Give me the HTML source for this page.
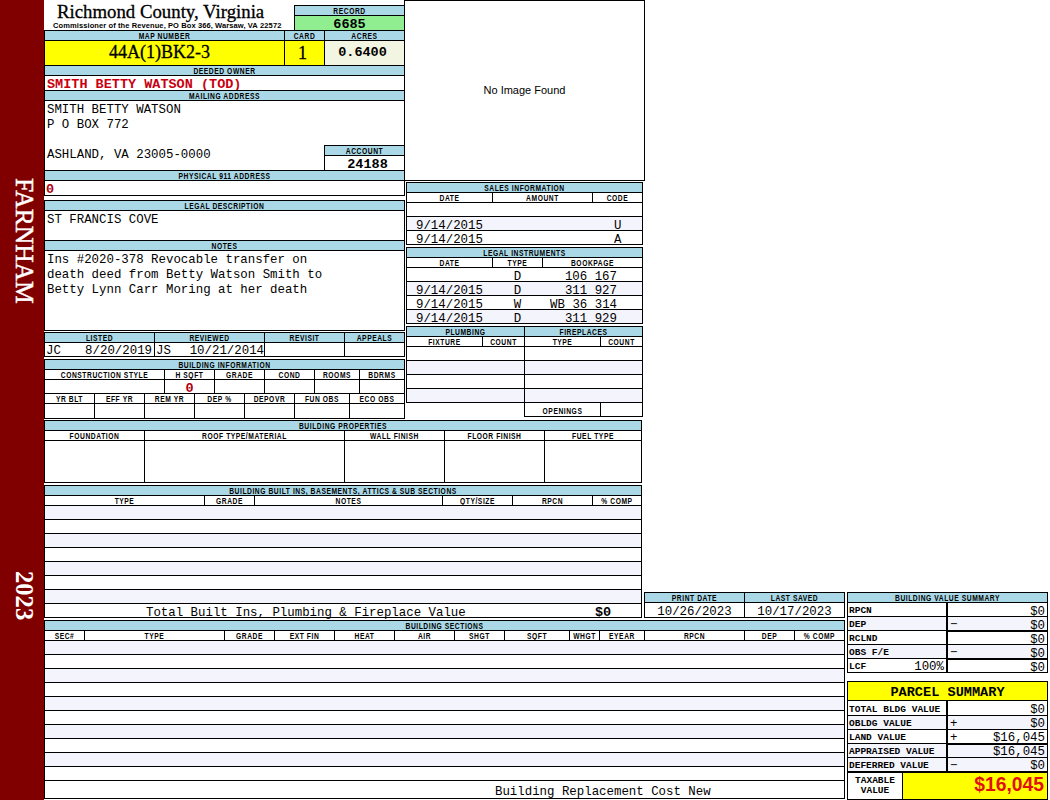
<!DOCTYPE html>
<html><head><meta charset="utf-8"><style>
html,body{margin:0;padding:0;background:#fff;width:1050px;height:800px;overflow:hidden}
body{position:relative}
div{position:absolute;box-sizing:border-box;white-space:nowrap}
.h{font-family:"Liberation Sans",sans-serif;font-weight:bold;font-size:8.4px;color:#000}
.m{font-family:"Liberation Mono",monospace;font-size:12.4px;color:#000}
.mb{font-family:"Liberation Mono",monospace;font-weight:bold;font-size:13.5px;color:#000}
.big{font-family:"Liberation Serif",serif;font-size:18px;color:#000;-webkit-text-stroke:0.3px #000}
.title{font-family:"Liberation Serif",serif;font-size:18.8px;color:#000;-webkit-text-stroke:0.3px #000}
.sub{font-family:"Liberation Sans",sans-serif;font-weight:bold;font-size:7.5px;letter-spacing:0.1px;color:#000}
.img{font-family:"Liberation Sans",sans-serif;font-size:11px;color:#000}
.lab{font-family:"Liberation Mono",monospace;font-weight:bold;font-size:9.5px;color:#000}
.ps{font-family:"Liberation Mono",monospace;font-weight:bold;font-size:13.6px;color:#000}
.tax{font-family:"Liberation Sans",sans-serif;font-weight:bold;font-size:19.3px;color:#e01010}
.red{color:#c80010}
.red2{color:#b00010}
.side{font-family:"Liberation Serif",serif;font-size:25.5px;color:#fff;-webkit-text-stroke:0.5px #fff;line-height:30px;transform-origin:0 0;transform:rotate(90deg) translate(0,-40px)}
.side2{font-family:"Liberation Serif",serif;font-weight:bold;font-size:24.6px;color:#fff;line-height:30px;transform-origin:0 0;transform:rotate(90deg) translate(0,-40px)}
</style></head><body>
<div style="left:0px;top:0px;width:44px;height:800px;background:#800000"></div>
<div class="side" style="left:-1px;top:178px;">FARNHAM</div>
<div class="side2" style="left:-1px;top:571px;">2023</div>
<div class="title" style="left:57px;top:2px;line-height:20px;text-align:left;">Richmond County, Virginia</div>
<div class="sub" style="left:53px;top:16px;line-height:20px;text-align:left;">Commissioner&nbsp;of&nbsp;the&nbsp;Revenue,&nbsp;PO&nbsp;Box&nbsp;366,&nbsp;Warsaw,&nbsp;VA&nbsp;22572</div>
<div style="left:294px;top:5px;width:111px;height:1px;background:#000"></div>
<div style="left:294px;top:30px;width:111px;height:1px;background:#000"></div>
<div style="left:294px;top:5px;width:1px;height:26px;background:#000"></div>
<div style="left:404px;top:5px;width:1px;height:26px;background:#000"></div>
<div style="left:294px;top:15px;width:111px;height:1px;background:#000"></div>
<div style="left:295px;top:6px;width:109px;height:9px;background:#aad8e6"></div>
<div class="h" style="left:295px;top:1px;width:109px;line-height:20px;text-align:center;transform:scaleX(0.8);letter-spacing:0.7px">RECORD</div>
<div style="left:295px;top:16px;width:109px;height:14px;background:#90ee90"></div>
<div class="mb" style="left:295px;top:15px;width:109px;line-height:20px;text-align:center;">6685</div>
<div style="left:44px;top:30px;width:361px;height:1px;background:#000"></div>
<div style="left:44px;top:40px;width:361px;height:1px;background:#000"></div>
<div style="left:44px;top:65px;width:361px;height:1px;background:#000"></div>
<div style="left:44px;top:30px;width:1px;height:166px;background:#000"></div>
<div style="left:404px;top:0px;width:1px;height:196px;background:#000"></div>
<div style="left:284px;top:30px;width:1px;height:36px;background:#000"></div>
<div style="left:324px;top:30px;width:1px;height:36px;background:#000"></div>
<div style="left:45px;top:31px;width:239px;height:9px;background:#aad8e6"></div>
<div class="h" style="left:45px;top:26px;width:239px;line-height:20px;text-align:center;transform:scaleX(0.8);letter-spacing:0.7px">MAP NUMBER</div>
<div style="left:285px;top:31px;width:39px;height:9px;background:#aad8e6"></div>
<div class="h" style="left:285px;top:26px;width:39px;line-height:20px;text-align:center;transform:scaleX(0.8);letter-spacing:0.7px">CARD</div>
<div style="left:325px;top:31px;width:79px;height:9px;background:#aad8e6"></div>
<div class="h" style="left:325px;top:26px;width:79px;line-height:20px;text-align:center;transform:scaleX(0.8);letter-spacing:0.7px">ACRES</div>
<div style="left:45px;top:41px;width:239px;height:24px;background:#ffff00"></div>
<div style="left:285px;top:41px;width:39px;height:24px;background:#ffff00"></div>
<div style="left:325px;top:41px;width:79px;height:24px;background:#f2f5e2"></div>
<div class="big" style="left:109px;top:42px;line-height:20px;text-align:left;">44A(1)BK2-3</div>
<div class="big" style="left:283px;top:43px;width:39px;line-height:20px;text-align:center;">1</div>
<div class="mb" style="left:323px;top:43px;width:79px;line-height:20px;text-align:center;">0.6400</div>
<div style="left:45px;top:66px;width:359px;height:9px;background:#aad8e6"></div>
<div class="h" style="left:45px;top:61px;width:359px;line-height:20px;text-align:center;transform:scaleX(0.8);letter-spacing:0.7px">DEEDED OWNER</div>
<div style="left:44px;top:75px;width:361px;height:1px;background:#000"></div>
<div class="mb red" style="left:47px;top:75px;line-height:20px;text-align:left;">SMITH&nbsp;BETTY&nbsp;WATSON&nbsp;(TOD)</div>
<div style="left:44px;top:90px;width:361px;height:1px;background:#000"></div>
<div style="left:45px;top:91px;width:359px;height:9px;background:#aad8e6"></div>
<div class="h" style="left:45px;top:86px;width:359px;line-height:20px;text-align:center;transform:scaleX(0.8);letter-spacing:0.7px">MAILING ADDRESS</div>
<div style="left:44px;top:100px;width:361px;height:1px;background:#000"></div>
<div class="m" style="left:47px;top:100px;line-height:20px;text-align:left;">SMITH&nbsp;BETTY&nbsp;WATSON</div>
<div class="m" style="left:47px;top:115px;line-height:20px;text-align:left;">P&nbsp;O&nbsp;BOX&nbsp;772</div>
<div class="m" style="left:47px;top:145px;line-height:20px;text-align:left;">ASHLAND,&nbsp;VA&nbsp;23005-0000</div>
<div style="left:324px;top:145px;width:81px;height:1px;background:#000"></div>
<div style="left:324px;top:170px;width:81px;height:1px;background:#000"></div>
<div style="left:324px;top:145px;width:1px;height:26px;background:#000"></div>
<div style="left:404px;top:145px;width:1px;height:26px;background:#000"></div>
<div style="left:324px;top:155px;width:81px;height:1px;background:#000"></div>
<div style="left:325px;top:146px;width:79px;height:9px;background:#aad8e6"></div>
<div class="h" style="left:325px;top:141px;width:79px;line-height:20px;text-align:center;transform:scaleX(0.8);letter-spacing:0.7px">ACCOUNT</div>
<div class="mb" style="left:328px;top:155px;width:79px;line-height:20px;text-align:center;">24188</div>
<div style="left:44px;top:170px;width:361px;height:1px;background:#000"></div>
<div style="left:45px;top:171px;width:359px;height:9px;background:#aad8e6"></div>
<div class="h" style="left:45px;top:166px;width:359px;line-height:20px;text-align:center;transform:scaleX(0.8);letter-spacing:0.7px">PHYSICAL 911 ADDRESS</div>
<div style="left:44px;top:180px;width:361px;height:1px;background:#000"></div>
<div class="mb red2" style="left:46px;top:180px;line-height:20px;text-align:left;">0</div>
<div style="left:44px;top:195px;width:361px;height:1px;background:#000"></div>
<div style="left:44px;top:200px;width:361px;height:1px;background:#000"></div>
<div style="left:44px;top:330px;width:361px;height:1px;background:#000"></div>
<div style="left:44px;top:200px;width:1px;height:131px;background:#000"></div>
<div style="left:404px;top:200px;width:1px;height:131px;background:#000"></div>
<div style="left:45px;top:201px;width:359px;height:9px;background:#aad8e6"></div>
<div class="h" style="left:45px;top:196px;width:359px;line-height:20px;text-align:center;transform:scaleX(0.8);letter-spacing:0.7px">LEGAL DESCRIPTION</div>
<div style="left:44px;top:210px;width:361px;height:1px;background:#000"></div>
<div class="m" style="left:47px;top:210px;line-height:20px;text-align:left;">ST&nbsp;FRANCIS&nbsp;COVE</div>
<div style="left:44px;top:240px;width:361px;height:1px;background:#000"></div>
<div style="left:45px;top:241px;width:359px;height:9px;background:#aad8e6"></div>
<div class="h" style="left:45px;top:236px;width:359px;line-height:20px;text-align:center;transform:scaleX(0.8);letter-spacing:0.7px">NOTES</div>
<div style="left:44px;top:250px;width:361px;height:1px;background:#000"></div>
<div class="m" style="left:47px;top:250px;line-height:20px;text-align:left;">Ins&nbsp;#2020-378&nbsp;Revocable&nbsp;transfer&nbsp;on</div>
<div class="m" style="left:47px;top:265px;line-height:20px;text-align:left;">death&nbsp;deed&nbsp;from&nbsp;Betty&nbsp;Watson&nbsp;Smith&nbsp;to</div>
<div class="m" style="left:47px;top:280px;line-height:20px;text-align:left;">Betty&nbsp;Lynn&nbsp;Carr&nbsp;Moring&nbsp;at&nbsp;her&nbsp;death</div>
<div style="left:44px;top:332px;width:361px;height:1px;background:#000"></div>
<div style="left:44px;top:356px;width:361px;height:1px;background:#000"></div>
<div style="left:44px;top:332px;width:1px;height:25px;background:#000"></div>
<div style="left:404px;top:332px;width:1px;height:25px;background:#000"></div>
<div style="left:44px;top:342px;width:361px;height:1px;background:#000"></div>
<div style="left:45px;top:333px;width:109px;height:9px;background:#aad8e6"></div>
<div class="h" style="left:45px;top:328px;width:109px;line-height:20px;text-align:center;transform:scaleX(0.8);letter-spacing:0.7px">LISTED</div>
<div style="left:44px;top:332px;width:1px;height:25px;background:#000"></div>
<div style="left:155px;top:333px;width:109px;height:9px;background:#aad8e6"></div>
<div class="h" style="left:155px;top:328px;width:109px;line-height:20px;text-align:center;transform:scaleX(0.8);letter-spacing:0.7px">REVIEWED</div>
<div style="left:154px;top:332px;width:1px;height:25px;background:#000"></div>
<div style="left:265px;top:333px;width:79px;height:9px;background:#aad8e6"></div>
<div class="h" style="left:265px;top:328px;width:79px;line-height:20px;text-align:center;transform:scaleX(0.8);letter-spacing:0.7px">REVISIT</div>
<div style="left:264px;top:332px;width:1px;height:25px;background:#000"></div>
<div style="left:345px;top:333px;width:59px;height:9px;background:#aad8e6"></div>
<div class="h" style="left:345px;top:328px;width:59px;line-height:20px;text-align:center;transform:scaleX(0.8);letter-spacing:0.7px">APPEALS</div>
<div style="left:344px;top:332px;width:1px;height:25px;background:#000"></div>
<div class="m" style="left:46px;top:341px;line-height:20px;text-align:left;">JC</div>
<div class="m" style="left:80px;top:341px;width:72px;line-height:20px;text-align:right;">8/20/2019</div>
<div class="m" style="left:156px;top:341px;line-height:20px;text-align:left;">JS</div>
<div class="m" style="left:180px;top:341px;width:84px;line-height:20px;text-align:right;">10/21/2014</div>
<div style="left:44px;top:359px;width:361px;height:1px;background:#000"></div>
<div style="left:44px;top:418px;width:361px;height:1px;background:#000"></div>
<div style="left:44px;top:359px;width:1px;height:60px;background:#000"></div>
<div style="left:404px;top:359px;width:1px;height:60px;background:#000"></div>
<div style="left:45px;top:360px;width:359px;height:9px;background:#aad8e6"></div>
<div class="h" style="left:45px;top:355px;width:359px;line-height:20px;text-align:center;transform:scaleX(0.8);letter-spacing:0.7px">BUILDING INFORMATION</div>
<div style="left:44px;top:369px;width:361px;height:1px;background:#000"></div>
<div class="h" style="left:45px;top:365px;width:119px;line-height:20px;text-align:center;transform:scaleX(0.8);letter-spacing:0.7px">CONSTRUCTION&nbsp;STYLE</div>
<div style="left:44px;top:369px;width:1px;height:25px;background:#000"></div>
<div class="h" style="left:165px;top:365px;width:49px;line-height:20px;text-align:center;transform:scaleX(0.8);letter-spacing:0.7px">H&nbsp;SQFT</div>
<div style="left:164px;top:369px;width:1px;height:25px;background:#000"></div>
<div class="h" style="left:215px;top:365px;width:49px;line-height:20px;text-align:center;transform:scaleX(0.8);letter-spacing:0.7px">GRADE</div>
<div style="left:214px;top:369px;width:1px;height:25px;background:#000"></div>
<div class="h" style="left:265px;top:365px;width:49px;line-height:20px;text-align:center;transform:scaleX(0.8);letter-spacing:0.7px">COND</div>
<div style="left:264px;top:369px;width:1px;height:25px;background:#000"></div>
<div class="h" style="left:315px;top:365px;width:44px;line-height:20px;text-align:center;transform:scaleX(0.8);letter-spacing:0.7px">ROOMS</div>
<div style="left:314px;top:369px;width:1px;height:25px;background:#000"></div>
<div class="h" style="left:360px;top:365px;width:44px;line-height:20px;text-align:center;transform:scaleX(0.8);letter-spacing:0.7px">BDRMS</div>
<div style="left:359px;top:369px;width:1px;height:25px;background:#000"></div>
<div style="left:44px;top:379px;width:361px;height:1px;background:#000"></div>
<div style="left:44px;top:393px;width:361px;height:1px;background:#000"></div>
<div class="mb red2" style="left:165px;top:379px;width:49px;line-height:20px;text-align:center;">0</div>
<div class="h" style="left:45px;top:389px;width:49px;line-height:20px;text-align:center;transform:scaleX(0.8);letter-spacing:0.7px">YR&nbsp;BLT</div>
<div style="left:44px;top:393px;width:1px;height:26px;background:#000"></div>
<div class="h" style="left:95px;top:389px;width:49px;line-height:20px;text-align:center;transform:scaleX(0.8);letter-spacing:0.7px">EFF&nbsp;YR</div>
<div style="left:94px;top:393px;width:1px;height:26px;background:#000"></div>
<div class="h" style="left:145px;top:389px;width:49px;line-height:20px;text-align:center;transform:scaleX(0.8);letter-spacing:0.7px">REM&nbsp;YR</div>
<div style="left:144px;top:393px;width:1px;height:26px;background:#000"></div>
<div class="h" style="left:195px;top:389px;width:49px;line-height:20px;text-align:center;transform:scaleX(0.8);letter-spacing:0.7px">DEP&nbsp;%</div>
<div style="left:194px;top:393px;width:1px;height:26px;background:#000"></div>
<div class="h" style="left:245px;top:389px;width:49px;line-height:20px;text-align:center;transform:scaleX(0.8);letter-spacing:0.7px">DEPOVR</div>
<div style="left:244px;top:393px;width:1px;height:26px;background:#000"></div>
<div class="h" style="left:295px;top:389px;width:54px;line-height:20px;text-align:center;transform:scaleX(0.8);letter-spacing:0.7px">FUN&nbsp;OBS</div>
<div style="left:294px;top:393px;width:1px;height:26px;background:#000"></div>
<div class="h" style="left:350px;top:389px;width:54px;line-height:20px;text-align:center;transform:scaleX(0.8);letter-spacing:0.7px">ECO&nbsp;OBS</div>
<div style="left:349px;top:393px;width:1px;height:26px;background:#000"></div>
<div style="left:44px;top:403px;width:361px;height:1px;background:#000"></div>
<div style="left:404px;top:0px;width:241px;height:1px;background:#000"></div>
<div style="left:404px;top:180px;width:241px;height:1px;background:#000"></div>
<div style="left:404px;top:0px;width:1px;height:181px;background:#000"></div>
<div style="left:644px;top:0px;width:1px;height:181px;background:#000"></div>
<div class="img" style="left:405px;top:80px;width:239px;line-height:20px;text-align:center;">No&nbsp;Image&nbsp;Found</div>
<div style="left:406px;top:182px;width:237px;height:1px;background:#000"></div>
<div style="left:406px;top:244px;width:237px;height:1px;background:#000"></div>
<div style="left:406px;top:182px;width:1px;height:63px;background:#000"></div>
<div style="left:642px;top:182px;width:1px;height:63px;background:#000"></div>
<div style="left:407px;top:183px;width:235px;height:9px;background:#aad8e6"></div>
<div class="h" style="left:407px;top:178px;width:235px;line-height:20px;text-align:center;transform:scaleX(0.8);letter-spacing:0.7px">SALES&nbsp;INFORMATION</div>
<div style="left:406px;top:192px;width:237px;height:1px;background:#000"></div>
<div class="h" style="left:407px;top:188px;width:85px;line-height:20px;text-align:center;transform:scaleX(0.8);letter-spacing:0.7px">DATE</div>
<div class="h" style="left:493px;top:188px;width:99px;line-height:20px;text-align:center;transform:scaleX(0.8);letter-spacing:0.7px">AMOUNT</div>
<div class="h" style="left:593px;top:188px;width:49px;line-height:20px;text-align:center;transform:scaleX(0.8);letter-spacing:0.7px">CODE</div>
<div style="left:492px;top:192px;width:1px;height:11px;background:#000"></div>
<div style="left:592px;top:192px;width:1px;height:11px;background:#000"></div>
<div style="left:406px;top:202px;width:237px;height:1px;background:#000"></div>
<div style="left:406px;top:216px;width:237px;height:1px;background:#000"></div>
<div style="left:406px;top:230px;width:237px;height:1px;background:#000"></div>
<div style="left:407px;top:217px;width:235px;height:13px;background:#f4f4fc"></div>
<div class="m" style="left:416px;top:216px;line-height:20px;text-align:left;">9/14/2015</div>
<div class="m" style="left:614px;top:216px;line-height:20px;text-align:left;">U</div>
<div class="m" style="left:416px;top:230px;line-height:20px;text-align:left;">9/14/2015</div>
<div class="m" style="left:614px;top:230px;line-height:20px;text-align:left;">A</div>
<div style="left:406px;top:247px;width:237px;height:1px;background:#000"></div>
<div style="left:406px;top:323px;width:237px;height:1px;background:#000"></div>
<div style="left:406px;top:247px;width:1px;height:77px;background:#000"></div>
<div style="left:642px;top:247px;width:1px;height:77px;background:#000"></div>
<div style="left:407px;top:248px;width:235px;height:9px;background:#aad8e6"></div>
<div class="h" style="left:407px;top:243px;width:235px;line-height:20px;text-align:center;transform:scaleX(0.8);letter-spacing:0.7px">LEGAL&nbsp;INSTRUMENTS</div>
<div style="left:406px;top:257px;width:237px;height:1px;background:#000"></div>
<div class="h" style="left:407px;top:253px;width:85px;line-height:20px;text-align:center;transform:scaleX(0.8);letter-spacing:0.7px">DATE</div>
<div class="h" style="left:493px;top:253px;width:49px;line-height:20px;text-align:center;transform:scaleX(0.8);letter-spacing:0.7px">TYPE</div>
<div class="h" style="left:543px;top:253px;width:99px;line-height:20px;text-align:center;transform:scaleX(0.8);letter-spacing:0.7px">BOOKPAGE</div>
<div style="left:492px;top:257px;width:1px;height:11px;background:#000"></div>
<div style="left:542px;top:257px;width:1px;height:11px;background:#000"></div>
<div style="left:406px;top:267px;width:237px;height:1px;background:#000"></div>
<div class="m" style="left:492px;top:267px;width:51px;line-height:20px;text-align:center;">D</div>
<div class="m" style="left:517px;top:267px;width:100px;line-height:20px;text-align:right;">106&nbsp;167</div>
<div style="left:406px;top:281px;width:237px;height:1px;background:#000"></div>
<div style="left:407px;top:282px;width:235px;height:13px;background:#f4f4fc"></div>
<div class="m" style="left:416px;top:281px;line-height:20px;text-align:left;">9/14/2015</div>
<div class="m" style="left:492px;top:281px;width:51px;line-height:20px;text-align:center;">D</div>
<div class="m" style="left:517px;top:281px;width:100px;line-height:20px;text-align:right;">311&nbsp;927</div>
<div style="left:406px;top:295px;width:237px;height:1px;background:#000"></div>
<div class="m" style="left:416px;top:295px;line-height:20px;text-align:left;">9/14/2015</div>
<div class="m" style="left:492px;top:295px;width:51px;line-height:20px;text-align:center;">W</div>
<div class="m" style="left:517px;top:295px;width:100px;line-height:20px;text-align:right;">WB&nbsp;36&nbsp;314</div>
<div style="left:406px;top:309px;width:237px;height:1px;background:#000"></div>
<div style="left:407px;top:310px;width:235px;height:13px;background:#f4f4fc"></div>
<div class="m" style="left:416px;top:309px;line-height:20px;text-align:left;">9/14/2015</div>
<div class="m" style="left:492px;top:309px;width:51px;line-height:20px;text-align:center;">D</div>
<div class="m" style="left:517px;top:309px;width:100px;line-height:20px;text-align:right;">311&nbsp;929</div>
<div style="left:406px;top:323px;width:237px;height:1px;background:#000"></div>
<div style="left:406px;top:326px;width:119px;height:1px;background:#000"></div>
<div style="left:406px;top:402px;width:119px;height:1px;background:#000"></div>
<div style="left:406px;top:326px;width:1px;height:77px;background:#000"></div>
<div style="left:524px;top:326px;width:1px;height:77px;background:#000"></div>
<div style="left:524px;top:326px;width:119px;height:1px;background:#000"></div>
<div style="left:524px;top:416px;width:119px;height:1px;background:#000"></div>
<div style="left:524px;top:326px;width:1px;height:91px;background:#000"></div>
<div style="left:642px;top:326px;width:1px;height:91px;background:#000"></div>
<div style="left:407px;top:327px;width:117px;height:9px;background:#aad8e6"></div>
<div class="h" style="left:407px;top:322px;width:117px;line-height:20px;text-align:center;transform:scaleX(0.8);letter-spacing:0.7px">PLUMBING</div>
<div style="left:525px;top:327px;width:117px;height:9px;background:#aad8e6"></div>
<div class="h" style="left:525px;top:322px;width:117px;line-height:20px;text-align:center;transform:scaleX(0.8);letter-spacing:0.7px">FIREPLACES</div>
<div style="left:406px;top:336px;width:237px;height:1px;background:#000"></div>
<div style="left:406px;top:346px;width:237px;height:1px;background:#000"></div>
<div class="h" style="left:407px;top:332px;width:75px;line-height:20px;text-align:center;transform:scaleX(0.8);letter-spacing:0.7px">FIXTURE</div>
<div class="h" style="left:483px;top:332px;width:41px;line-height:20px;text-align:center;transform:scaleX(0.8);letter-spacing:0.7px">COUNT</div>
<div class="h" style="left:525px;top:332px;width:75px;line-height:20px;text-align:center;transform:scaleX(0.8);letter-spacing:0.7px">TYPE</div>
<div class="h" style="left:601px;top:332px;width:41px;line-height:20px;text-align:center;transform:scaleX(0.8);letter-spacing:0.7px">COUNT</div>
<div style="left:482px;top:336px;width:1px;height:11px;background:#000"></div>
<div style="left:600px;top:336px;width:1px;height:11px;background:#000"></div>
<div style="left:600px;top:402px;width:1px;height:15px;background:#000"></div>
<div style="left:406px;top:360px;width:237px;height:1px;background:#000"></div>
<div style="left:407px;top:361px;width:235px;height:13px;background:#f4f4fc"></div>
<div style="left:406px;top:374px;width:237px;height:1px;background:#000"></div>
<div style="left:406px;top:388px;width:237px;height:1px;background:#000"></div>
<div style="left:407px;top:389px;width:235px;height:13px;background:#f4f4fc"></div>
<div style="left:406px;top:402px;width:237px;height:1px;background:#000"></div>
<div style="left:524px;top:326px;width:1px;height:91px;background:#000"></div>
<div class="h" style="left:525px;top:401px;width:75px;line-height:20px;text-align:center;transform:scaleX(0.8);letter-spacing:0.7px">OPENINGS</div>
<div style="left:44px;top:420px;width:598px;height:1px;background:#000"></div>
<div style="left:44px;top:482px;width:598px;height:1px;background:#000"></div>
<div style="left:44px;top:420px;width:1px;height:63px;background:#000"></div>
<div style="left:641px;top:420px;width:1px;height:63px;background:#000"></div>
<div style="left:45px;top:421px;width:596px;height:9px;background:#aad8e6"></div>
<div class="h" style="left:45px;top:416px;width:596px;line-height:20px;text-align:center;transform:scaleX(0.8);letter-spacing:0.7px">BUILDING&nbsp;PROPERTIES</div>
<div style="left:44px;top:430px;width:598px;height:1px;background:#000"></div>
<div style="left:44px;top:440px;width:598px;height:1px;background:#000"></div>
<div class="h" style="left:45px;top:426px;width:99px;line-height:20px;text-align:center;transform:scaleX(0.8);letter-spacing:0.7px">FOUNDATION</div>
<div style="left:44px;top:430px;width:1px;height:53px;background:#000"></div>
<div class="h" style="left:145px;top:426px;width:199px;line-height:20px;text-align:center;transform:scaleX(0.8);letter-spacing:0.7px">ROOF&nbsp;TYPE/MATERIAL</div>
<div style="left:144px;top:430px;width:1px;height:53px;background:#000"></div>
<div class="h" style="left:345px;top:426px;width:99px;line-height:20px;text-align:center;transform:scaleX(0.8);letter-spacing:0.7px">WALL&nbsp;FINISH</div>
<div style="left:344px;top:430px;width:1px;height:53px;background:#000"></div>
<div class="h" style="left:445px;top:426px;width:99px;line-height:20px;text-align:center;transform:scaleX(0.8);letter-spacing:0.7px">FLOOR&nbsp;FINISH</div>
<div style="left:444px;top:430px;width:1px;height:53px;background:#000"></div>
<div class="h" style="left:545px;top:426px;width:96px;line-height:20px;text-align:center;transform:scaleX(0.8);letter-spacing:0.7px">FUEL&nbsp;TYPE</div>
<div style="left:544px;top:430px;width:1px;height:53px;background:#000"></div>
<div style="left:44px;top:485px;width:598px;height:1px;background:#000"></div>
<div style="left:44px;top:617px;width:598px;height:1px;background:#000"></div>
<div style="left:44px;top:485px;width:1px;height:133px;background:#000"></div>
<div style="left:641px;top:485px;width:1px;height:133px;background:#000"></div>
<div style="left:45px;top:486px;width:596px;height:9px;background:#aad8e6"></div>
<div class="h" style="left:45px;top:481px;width:596px;line-height:20px;text-align:center;transform:scaleX(0.8);letter-spacing:0.7px">BUILDING&nbsp;BUILT&nbsp;INS,&nbsp;BASEMENTS,&nbsp;ATTICS&nbsp;&amp;&nbsp;SUB&nbsp;SECTIONS</div>
<div style="left:44px;top:495px;width:598px;height:1px;background:#000"></div>
<div style="left:44px;top:505px;width:598px;height:1px;background:#000"></div>
<div class="h" style="left:45px;top:491px;width:159px;line-height:20px;text-align:center;transform:scaleX(0.8);letter-spacing:0.7px">TYPE</div>
<div style="left:44px;top:495px;width:1px;height:11px;background:#000"></div>
<div class="h" style="left:205px;top:491px;width:49px;line-height:20px;text-align:center;transform:scaleX(0.8);letter-spacing:0.7px">GRADE</div>
<div style="left:204px;top:495px;width:1px;height:11px;background:#000"></div>
<div class="h" style="left:255px;top:491px;width:187px;line-height:20px;text-align:center;transform:scaleX(0.8);letter-spacing:0.7px">NOTES</div>
<div style="left:254px;top:495px;width:1px;height:11px;background:#000"></div>
<div class="h" style="left:443px;top:491px;width:69px;line-height:20px;text-align:center;transform:scaleX(0.8);letter-spacing:0.7px">QTY/SIZE</div>
<div style="left:442px;top:495px;width:1px;height:11px;background:#000"></div>
<div class="h" style="left:513px;top:491px;width:79px;line-height:20px;text-align:center;transform:scaleX(0.8);letter-spacing:0.7px">RPCN</div>
<div style="left:512px;top:495px;width:1px;height:11px;background:#000"></div>
<div class="h" style="left:593px;top:491px;width:48px;line-height:20px;text-align:center;transform:scaleX(0.8);letter-spacing:0.7px">%&nbsp;COMP</div>
<div style="left:592px;top:495px;width:1px;height:11px;background:#000"></div>
<div style="left:45px;top:506px;width:596px;height:13px;background:#f4f4fc"></div>
<div style="left:44px;top:519px;width:598px;height:1px;background:#000"></div>
<div style="left:44px;top:533px;width:598px;height:1px;background:#000"></div>
<div style="left:45px;top:534px;width:596px;height:13px;background:#f4f4fc"></div>
<div style="left:44px;top:547px;width:598px;height:1px;background:#000"></div>
<div style="left:44px;top:561px;width:598px;height:1px;background:#000"></div>
<div style="left:45px;top:562px;width:596px;height:13px;background:#f4f4fc"></div>
<div style="left:44px;top:575px;width:598px;height:1px;background:#000"></div>
<div style="left:44px;top:589px;width:598px;height:1px;background:#000"></div>
<div style="left:45px;top:590px;width:596px;height:13px;background:#f4f4fc"></div>
<div style="left:44px;top:603px;width:598px;height:1px;background:#000"></div>
<div class="m" style="left:146px;top:603px;line-height:20px;text-align:left;">Total&nbsp;Built&nbsp;Ins,&nbsp;Plumbing&nbsp;&amp;&nbsp;Fireplace&nbsp;Value</div>
<div class="mb" style="left:595px;top:603px;line-height:20px;text-align:left;">$0</div>
<div style="left:644px;top:592px;width:201px;height:1px;background:#000"></div>
<div style="left:644px;top:617px;width:201px;height:1px;background:#000"></div>
<div style="left:644px;top:592px;width:1px;height:26px;background:#000"></div>
<div style="left:844px;top:592px;width:1px;height:26px;background:#000"></div>
<div style="left:644px;top:602px;width:201px;height:1px;background:#000"></div>
<div style="left:744px;top:592px;width:1px;height:26px;background:#000"></div>
<div style="left:645px;top:593px;width:99px;height:9px;background:#aad8e6"></div>
<div class="h" style="left:645px;top:588px;width:99px;line-height:20px;text-align:center;transform:scaleX(0.8);letter-spacing:0.7px">PRINT&nbsp;DATE</div>
<div style="left:745px;top:593px;width:99px;height:9px;background:#aad8e6"></div>
<div class="h" style="left:745px;top:588px;width:99px;line-height:20px;text-align:center;transform:scaleX(0.8);letter-spacing:0.7px">LAST&nbsp;SAVED</div>
<div class="m" style="left:645px;top:602px;width:99px;line-height:20px;text-align:center;">10/26/2023</div>
<div class="m" style="left:745px;top:602px;width:99px;line-height:20px;text-align:center;">10/17/2023</div>
<div style="left:44px;top:620px;width:801px;height:1px;background:#000"></div>
<div style="left:44px;top:798px;width:801px;height:1px;background:#000"></div>
<div style="left:44px;top:620px;width:1px;height:179px;background:#000"></div>
<div style="left:844px;top:620px;width:1px;height:179px;background:#000"></div>
<div style="left:45px;top:621px;width:799px;height:9px;background:#aad8e6"></div>
<div class="h" style="left:45px;top:616px;width:799px;line-height:20px;text-align:center;transform:scaleX(0.8);letter-spacing:0.7px">BUILDING&nbsp;SECTIONS</div>
<div style="left:44px;top:630px;width:801px;height:1px;background:#000"></div>
<div style="left:44px;top:640px;width:801px;height:1px;background:#000"></div>
<div class="h" style="left:45px;top:626px;width:39px;line-height:20px;text-align:center;transform:scaleX(0.8);letter-spacing:0.7px">SEC#</div>
<div style="left:44px;top:630px;width:1px;height:11px;background:#000"></div>
<div class="h" style="left:85px;top:626px;width:139px;line-height:20px;text-align:center;transform:scaleX(0.8);letter-spacing:0.7px">TYPE</div>
<div style="left:84px;top:630px;width:1px;height:11px;background:#000"></div>
<div class="h" style="left:225px;top:626px;width:49px;line-height:20px;text-align:center;transform:scaleX(0.8);letter-spacing:0.7px">GRADE</div>
<div style="left:224px;top:630px;width:1px;height:11px;background:#000"></div>
<div class="h" style="left:275px;top:626px;width:59px;line-height:20px;text-align:center;transform:scaleX(0.8);letter-spacing:0.7px">EXT&nbsp;FIN</div>
<div style="left:274px;top:630px;width:1px;height:11px;background:#000"></div>
<div class="h" style="left:335px;top:626px;width:59px;line-height:20px;text-align:center;transform:scaleX(0.8);letter-spacing:0.7px">HEAT</div>
<div style="left:334px;top:630px;width:1px;height:11px;background:#000"></div>
<div class="h" style="left:395px;top:626px;width:59px;line-height:20px;text-align:center;transform:scaleX(0.8);letter-spacing:0.7px">AIR</div>
<div style="left:394px;top:630px;width:1px;height:11px;background:#000"></div>
<div class="h" style="left:455px;top:626px;width:49px;line-height:20px;text-align:center;transform:scaleX(0.8);letter-spacing:0.7px">SHGT</div>
<div style="left:454px;top:630px;width:1px;height:11px;background:#000"></div>
<div class="h" style="left:505px;top:626px;width:64px;line-height:20px;text-align:center;transform:scaleX(0.8);letter-spacing:0.7px">SQFT</div>
<div style="left:504px;top:630px;width:1px;height:11px;background:#000"></div>
<div class="h" style="left:570px;top:626px;width:29px;line-height:20px;text-align:center;transform:scaleX(0.8);letter-spacing:0.7px">WHGT</div>
<div style="left:569px;top:630px;width:1px;height:11px;background:#000"></div>
<div class="h" style="left:600px;top:626px;width:44px;line-height:20px;text-align:center;transform:scaleX(0.8);letter-spacing:0.7px">EYEAR</div>
<div style="left:599px;top:630px;width:1px;height:11px;background:#000"></div>
<div class="h" style="left:645px;top:626px;width:99px;line-height:20px;text-align:center;transform:scaleX(0.8);letter-spacing:0.7px">RPCN</div>
<div style="left:644px;top:630px;width:1px;height:11px;background:#000"></div>
<div class="h" style="left:745px;top:626px;width:49px;line-height:20px;text-align:center;transform:scaleX(0.8);letter-spacing:0.7px">DEP</div>
<div style="left:744px;top:630px;width:1px;height:11px;background:#000"></div>
<div class="h" style="left:795px;top:626px;width:49px;line-height:20px;text-align:center;transform:scaleX(0.8);letter-spacing:0.7px">%&nbsp;COMP</div>
<div style="left:794px;top:630px;width:1px;height:11px;background:#000"></div>
<div style="left:45px;top:641px;width:799px;height:13px;background:#f4f4fc"></div>
<div style="left:44px;top:654px;width:801px;height:1px;background:#000"></div>
<div style="left:44px;top:668px;width:801px;height:1px;background:#000"></div>
<div style="left:45px;top:669px;width:799px;height:13px;background:#f4f4fc"></div>
<div style="left:44px;top:682px;width:801px;height:1px;background:#000"></div>
<div style="left:44px;top:696px;width:801px;height:1px;background:#000"></div>
<div style="left:45px;top:697px;width:799px;height:13px;background:#f4f4fc"></div>
<div style="left:44px;top:710px;width:801px;height:1px;background:#000"></div>
<div style="left:44px;top:724px;width:801px;height:1px;background:#000"></div>
<div style="left:45px;top:725px;width:799px;height:13px;background:#f4f4fc"></div>
<div style="left:44px;top:738px;width:801px;height:1px;background:#000"></div>
<div style="left:44px;top:752px;width:801px;height:1px;background:#000"></div>
<div style="left:45px;top:753px;width:799px;height:13px;background:#f4f4fc"></div>
<div style="left:44px;top:766px;width:801px;height:1px;background:#000"></div>
<div style="left:44px;top:780px;width:801px;height:1px;background:#000"></div>
<div class="m" style="left:495px;top:782px;line-height:20px;text-align:left;">Building&nbsp;Replacement&nbsp;Cost&nbsp;New</div>
<div style="left:847px;top:592px;width:201px;height:1px;background:#000"></div>
<div style="left:847px;top:672px;width:201px;height:1px;background:#000"></div>
<div style="left:847px;top:592px;width:1px;height:81px;background:#000"></div>
<div style="left:1047px;top:592px;width:1px;height:81px;background:#000"></div>
<div style="left:848px;top:593px;width:199px;height:9px;background:#aad8e6"></div>
<div class="h" style="left:848px;top:588px;width:199px;line-height:20px;text-align:center;transform:scaleX(0.8);letter-spacing:0.7px">BUILDING&nbsp;VALUE&nbsp;SUMMARY</div>
<div style="left:847px;top:602px;width:201px;height:1px;background:#000"></div>
<div class="lab" style="left:849px;top:601px;line-height:20px;text-align:left;">RPCN</div>
<div class="m" style="left:900px;top:602px;width:145px;line-height:20px;text-align:right;">$0</div>
<div style="left:847px;top:616px;width:201px;height:1px;background:#000"></div>
<div style="left:848px;top:617px;width:98px;height:13px;background:#f4f4fc"></div>
<div style="left:948px;top:617px;width:99px;height:13px;background:#f4f4fc"></div>
<div class="lab" style="left:849px;top:615px;line-height:20px;text-align:left;">DEP</div>
<div class="m" style="left:950px;top:615px;line-height:20px;text-align:left;">&minus;</div>
<div class="m" style="left:900px;top:616px;width:145px;line-height:20px;text-align:right;">$0</div>
<div style="left:847px;top:630px;width:201px;height:1px;background:#000"></div>
<div class="lab" style="left:849px;top:629px;line-height:20px;text-align:left;">RCLND</div>
<div class="m" style="left:900px;top:630px;width:145px;line-height:20px;text-align:right;">$0</div>
<div style="left:847px;top:644px;width:201px;height:1px;background:#000"></div>
<div style="left:848px;top:645px;width:98px;height:13px;background:#f4f4fc"></div>
<div style="left:948px;top:645px;width:99px;height:13px;background:#f4f4fc"></div>
<div class="lab" style="left:849px;top:643px;line-height:20px;text-align:left;">OBS&nbsp;F/E</div>
<div class="m" style="left:950px;top:643px;line-height:20px;text-align:left;">&minus;</div>
<div class="m" style="left:900px;top:644px;width:145px;line-height:20px;text-align:right;">$0</div>
<div style="left:847px;top:658px;width:201px;height:1px;background:#000"></div>
<div class="lab" style="left:849px;top:657px;line-height:20px;text-align:left;">LCF</div>
<div class="m" style="left:900px;top:658px;width:145px;line-height:20px;text-align:right;">$0</div>
<div style="left:847px;top:672px;width:201px;height:1px;background:#000"></div>
<div class="m" style="left:849px;top:657px;width:95px;line-height:20px;text-align:right;">100%</div>
<div style="left:947px;top:630px;width:101px;height:2px;background:#000"></div>
<div style="left:947px;top:658px;width:101px;height:2px;background:#000"></div>
<div style="left:946px;top:602px;width:2px;height:71px;background:#000"></div>
<div style="left:847px;top:681px;width:201px;height:1px;background:#000"></div>
<div style="left:847px;top:799px;width:201px;height:1px;background:#000"></div>
<div style="left:847px;top:681px;width:1px;height:119px;background:#000"></div>
<div style="left:1047px;top:681px;width:1px;height:119px;background:#000"></div>
<div style="left:848px;top:682px;width:199px;height:18px;background:#ffff00"></div>
<div class="ps" style="left:848px;top:683px;width:199px;line-height:20px;text-align:center;">PARCEL&nbsp;SUMMARY</div>
<div style="left:847px;top:700px;width:201px;height:1px;background:#000"></div>
<div class="lab" style="left:849px;top:700px;line-height:20px;text-align:left;">TOTAL&nbsp;BLDG&nbsp;VALUE</div>
<div class="m" style="left:900px;top:700px;width:145px;line-height:20px;text-align:right;">$0</div>
<div style="left:847px;top:715px;width:201px;height:1px;background:#000"></div>
<div style="left:848px;top:716px;width:98px;height:13px;background:#f4f4fc"></div>
<div style="left:948px;top:716px;width:99px;height:13px;background:#f4f4fc"></div>
<div class="lab" style="left:849px;top:714px;line-height:20px;text-align:left;">OBLDG&nbsp;VALUE</div>
<div class="m" style="left:950px;top:714px;line-height:20px;text-align:left;">+</div>
<div class="m" style="left:900px;top:714px;width:145px;line-height:20px;text-align:right;">$0</div>
<div style="left:847px;top:729px;width:201px;height:1px;background:#000"></div>
<div class="lab" style="left:849px;top:728px;line-height:20px;text-align:left;">LAND&nbsp;VALUE</div>
<div class="m" style="left:950px;top:728px;line-height:20px;text-align:left;">+</div>
<div class="m" style="left:900px;top:728px;width:145px;line-height:20px;text-align:right;">$16,045</div>
<div style="left:847px;top:743px;width:201px;height:1px;background:#000"></div>
<div style="left:848px;top:744px;width:98px;height:13px;background:#f4f4fc"></div>
<div style="left:948px;top:744px;width:99px;height:13px;background:#f4f4fc"></div>
<div class="lab" style="left:849px;top:742px;line-height:20px;text-align:left;">APPRAISED&nbsp;VALUE</div>
<div class="m" style="left:900px;top:742px;width:145px;line-height:20px;text-align:right;">$16,045</div>
<div style="left:847px;top:757px;width:201px;height:1px;background:#000"></div>
<div style="left:848px;top:758px;width:98px;height:13px;background:#f4f4fc"></div>
<div style="left:948px;top:758px;width:99px;height:13px;background:#f4f4fc"></div>
<div class="lab" style="left:849px;top:756px;line-height:20px;text-align:left;">DEFERRED&nbsp;VALUE</div>
<div class="m" style="left:950px;top:756px;line-height:20px;text-align:left;">&minus;</div>
<div class="m" style="left:900px;top:756px;width:145px;line-height:20px;text-align:right;">$0</div>
<div style="left:847px;top:771px;width:201px;height:1px;background:#000"></div>
<div style="left:947px;top:744px;width:101px;height:1px;background:#000"></div>
<div style="left:847px;top:772px;width:201px;height:1px;background:#000"></div>
<div style="left:946px;top:700px;width:2px;height:73px;background:#000"></div>
<div style="left:902px;top:772px;width:1px;height:28px;background:#000"></div>
<div style="left:903px;top:773px;width:144px;height:26px;background:#ffff00"></div>
<div class="lab" style="left:848px;top:771px;width:54px;line-height:20px;text-align:center;">TAXABLE</div>
<div class="lab" style="left:848px;top:781px;width:54px;line-height:20px;text-align:center;">VALUE</div>
<div class="tax" style="left:903px;top:775px;width:141px;line-height:20px;text-align:right;">$16,045</div>
</body></html>
